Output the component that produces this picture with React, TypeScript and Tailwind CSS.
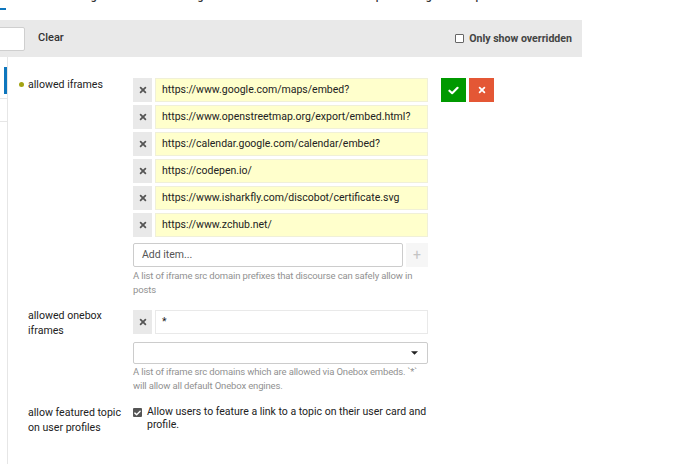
import React from "react";

const navItems = ["Users", "Badges", "Emails", "Logs", "Customize", "API", "Backups", "Plugins", "Update Discourse"];

const iframes = [
  "https://www.google.com/maps/embed?",
  "https://www.openstreetmap.org/export/embed.html?",
  "https://calendar.google.com/calendar/embed?",
  "https://codepen.io/",
  "https://www.isharkfly.com/discobot/certificate.svg",
  "https://www.zchub.net/",
];

function TimesIcon({ className }: { className?: string }) {
  return (
    <svg viewBox="0 0 10 10" className={className} fill="none" stroke="currentColor" strokeWidth="2.2" strokeLinecap="round">
      <path d="M2 2 L8 8 M8 2 L2 8" />
    </svg>
  );
}

function CheckIcon({ className }: { className?: string }) {
  return (
    <svg viewBox="0 0 12 10" className={className} fill="none" stroke="currentColor" strokeWidth="2.4" strokeLinecap="round" strokeLinejoin="round">
      <path d="M1.5 5.2 L4.5 8 L10.5 2" />
    </svg>
  );
}

function ListRow({ value, overridden }: { value: string; overridden?: boolean }) {
  return (
    <div className="flex h-[24px] gap-[3px]">
      <button className="flex w-[19px] shrink-0 items-center justify-center bg-[#e9e9e9] text-[#555]">
        <TimesIcon className="h-[8px] w-[8px]" />
      </button>
      <div
        className={
          "flex min-w-0 flex-1 items-center overflow-hidden whitespace-nowrap border px-[6px] text-[10.5px] text-[#222] " +
          (overridden ? "border-[#f0f0d8] bg-[#ffffcc]" : "border-[#e9e9e9] bg-white")
        }
      >
        {value}
      </div>
    </div>
  );
}

export default function App() {
  return (
    <div className="flex h-[464px] w-[690px] flex-col overflow-hidden bg-white font-['Roboto',sans-serif] text-[#222]">
      {/* top nav, mostly scrolled out of view */}
      <div className="flex h-[20px] shrink-0 items-start overflow-hidden">
        <div className="h-[10px] w-[6px] border-b-2 border-[#0e76bd]" />
        <div className="-mt-[10px] ml-[15px] flex gap-[22px] text-[11px] font-medium leading-[14px] text-[#333]">
          {navItems.map((item) => (
            <span key={item}>{item}</span>
          ))}
        </div>
      </div>

      {/* filter bar */}
      <div className="flex h-[37px] w-[582px] shrink-0 items-center bg-[#e9e9e9] pr-[10px]">
        <div className="-ml-[15px] h-[24px] w-[40px] rounded-[2px] border border-[#cfcfcf] bg-white" />
        <span className="ml-[13px] text-[11px] font-medium text-[#333]">Clear</span>
        <label className="ml-auto flex items-center gap-[5px] text-[10.6px] font-bold text-[#444]">
          <span className="h-[9px] w-[9px] rounded-[1px] border border-[#666] bg-white" />
          Only show overridden
        </label>
      </div>

      <div className="flex flex-1">
        {/* sidebar edge */}
        <div className="w-[8px] shrink-0 border-r border-[#e6e6e6]">
          <div className="h-[42px] border-b border-[#e6e6e6] pt-[10px]">
            <div className="ml-[4px] h-[27px] w-[3px] bg-[#0e76bd]" />
          </div>
          <div className="h-[23px] border-b border-[#e6e6e6]" />
        </div>

        {/* settings */}
        <div className="flex flex-col pt-[21px]">
          {/* allowed iframes */}
          <div className="flex">
            <div className="-mt-[1px] flex w-[125px] items-start pl-[11px]">
              <span className="mt-[5px] mr-[4px] h-[5px] w-[5px] rounded-full bg-[#a3a312]" />
              <span className="text-[10.6px] leading-[15px] text-[#222]">allowed iframes</span>
            </div>
            <div className="flex w-[295px] flex-col">
              <div className="flex flex-col gap-[3px]">
                {iframes.map((u) => (
                  <ListRow key={u} value={u} overridden />
                ))}
              </div>
              <div className="mt-[6px] flex h-[24px] gap-[3px]">
                <div className="flex flex-1 items-center rounded-[2px] border border-[#cccccc] px-[8px] text-[10.5px] text-[#555]">
                  Add item...
                </div>
                <div className="flex w-[22px] items-center justify-center bg-[#f6f6f6] text-[14px] text-[#c4c4c4]">+</div>
              </div>
              <p className="mt-[2px] text-[9.5px] leading-[14px] tracking-[-0.15px] text-[#919191]">
                A list of iframe src domain prefixes that discourse can safely allow in posts
              </p>
            </div>
            <div className="ml-[13px] flex gap-[3px]">
              <button className="flex h-[24px] w-[25px] items-center justify-center bg-[#009900] text-white">
                <CheckIcon className="h-[9px] w-[11px]" />
              </button>
              <button className="flex h-[24px] w-[25px] items-center justify-center bg-[#e45735] text-white">
                <TimesIcon className="h-[8px] w-[8px]" />
              </button>
            </div>
          </div>

          {/* allowed onebox iframes */}
          <div className="mt-[13px] flex">
            <div className="-mt-[2px] w-[125px] pl-[20px] text-[10.6px] leading-[15px]">allowed onebox iframes</div>
            <div className="flex w-[295px] flex-col">
              <ListRow value="*" />
              <div className="mt-[8px] flex h-[22px] items-center justify-end rounded-[2px] border border-[#cccccc] pr-[9px]">
                <svg viewBox="0 0 8 4" className="h-[4px] w-[7px] text-[#222]" fill="currentColor">
                  <path d="M0 0 H8 L4 4 Z" />
                </svg>
              </div>
              <p className="mt-[1px] text-[9.5px] leading-[14px] tracking-[-0.15px] text-[#919191]">
                A list of iframe src domains which are allowed via Onebox embeds. `*` will allow all default Onebox engines.
              </p>
            </div>
          </div>

          {/* allow featured topic */}
          <div className="mt-[12px] flex">
            <div className="w-[125px] pl-[20px] text-[10.6px] leading-[15px]">allow featured topic on user profiles</div>
            <div className="flex w-[295px] items-start gap-[5px]">
              <span className="mt-[3px] flex h-[9px] w-[9px] shrink-0 items-center justify-center rounded-[1px] bg-[#555] text-white">
                <CheckIcon className="h-[6px] w-[7px]" />
              </span>
              <span className="text-[10.5px] leading-[13px] text-[#222]">
                Allow users to feature a link to a topic on their user card and profile.
              </span>
            </div>
          </div>
        </div>
      </div>
    </div>
  );
}
